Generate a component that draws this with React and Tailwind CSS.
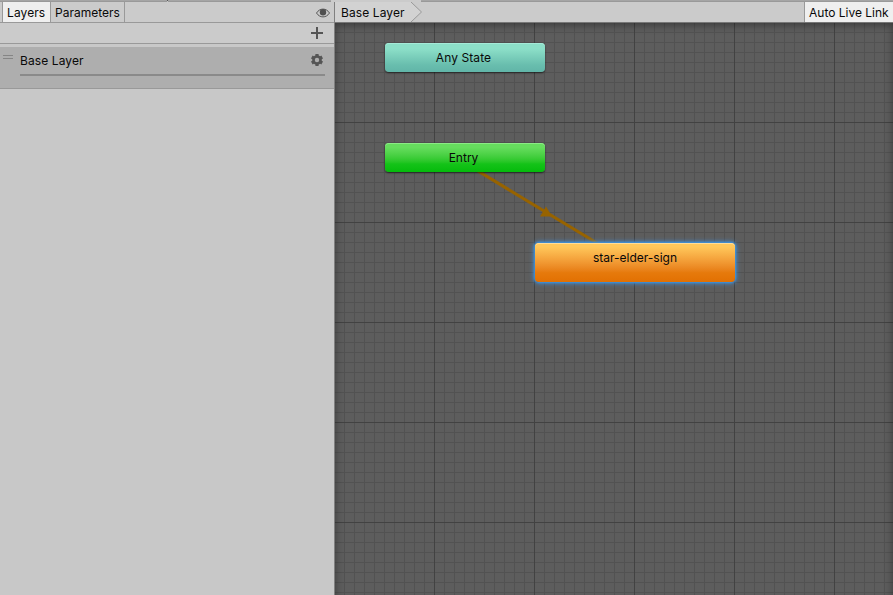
import clsx from 'clsx';

const MINOR_GRID =
  'bg-[linear-gradient(to_right,#525252_1px,transparent_1px),linear-gradient(to_bottom,#525252_1px,transparent_1px)] bg-[size:10px_10px] bg-[position:9px_9px]';
const MAJOR_GRID =
  'bg-[linear-gradient(to_right,#424242_1px,transparent_1px),linear-gradient(to_bottom,#424242_1px,transparent_1px)] bg-[size:100px_100px] bg-[position:99px_99px]';

const NODES = [
  {
    label: 'Any State',
    className:
      'left-[50px] top-[20px] w-[160px] h-[29px] pr-[3px] tracking-[0.1px] from-[#8cdfc8] from-20% via-[#69beae] via-75% to-[#61b5a8] shadow-[inset_0_1px_0_#a5ead8,0_1px_2px_rgba(0,0,0,0.6)]',
  },
  {
    label: 'Entry',
    className:
      'left-[50px] top-[120px] w-[160px] h-[29px] pr-[3px] from-[#66dd5e] from-15% via-[#14c318] via-72% to-[#04bb0b] shadow-[inset_0_1px_0_#8cea86,0_1px_2px_rgba(0,0,0,0.6)]',
  },
  {
    label: 'star-elder-sign',
    className:
      'left-[200px] top-[220px] w-[200px] h-[39px] from-[#ffc75a] from-10% via-[#e67a0c] via-76% to-[#e27002] shadow-[inset_0_1px_0_#ffdd98,0_0_2px_1px_#3f91dc,0_0_5px_1px_#3f91dc]',
  },
];

function Tab({ label, active }) {
  return (
    <button
      className={clsx(
        'h-5 border-r border-[#999] pt-px pl-1 text-left',
        active ? 'w-12 bg-[#efefef] tracking-[0.1px]' : 'w-[74px] bg-[#cbcbcb]'
      )}
    >
      {label}
    </button>
  );
}

function EyeIcon() {
  return (
    <svg width="14" height="10" viewBox="0 0 14 10" fill="none">
      <path d="M.5 5C3.7-.2 10.3-.2 13.5 5 10.3 10.2 3.7 10.2.5 5Z" stroke="#555" />
      <circle cx="7" cy="4.2" r="3.2" fill="#505050" />
    </svg>
  );
}

function GearIcon() {
  return (
    <svg width="12" height="12" viewBox="-6 -6 12 12" fill="#555">
      <circle r="3.5" fill="none" stroke="#555" strokeWidth="2.6" />
      {[0, 60, 120, 180, 240, 300].map((angle) => (
        <rect key={angle} x="-1.6" y="-6" width="3.2" height="2.6" transform={`rotate(${angle})`} />
      ))}
    </svg>
  );
}

function LayersPanel() {
  return (
    <aside className="flex w-[335px] flex-col border-r border-[#808080] bg-[#c8c8c8]">
      {/* Tabs */}
      <div className="flex h-[21px] items-start border-b border-[#999] bg-[#cbcbcb] pl-0.5">
        <div className="h-5 border-l border-[#999]" />
        <Tab label="Layers" active />
        <Tab label="Parameters" />
        <div className="mt-1.5 mr-[4px] ml-auto">
          <EyeIcon />
        </div>
      </div>

      {/* Add layer */}
      <div className="flex h-[21px] justify-end border-b border-[#999] bg-[#cbcbcb] pt-1 pr-[11px]">
        <svg width="12" height="12" viewBox="0 0 12 12" stroke="#555" strokeWidth="2">
          <path d="M6 0v12M0 6h12" />
        </svg>
      </div>

      {/* Layer row */}
      <div className="mt-[3px] flex h-[42px] border-b border-[#999] bg-[#aeaeae]">
        <div className="mt-2 ml-[3px] h-1 w-2.5 border-y border-[#858585]" />
        <div className="mr-[9px] ml-[7px] flex h-[29px] flex-1 items-start justify-between border-b-2 border-[#8a8a8a] pt-[5px]">
          <span className="tracking-[0.1px]">Base Layer</span>
          <span className="mt-0.5 mr-[2px]">
            <GearIcon />
          </span>
        </div>
      </div>
    </aside>
  );
}

function StateGraph() {
  return (
    <div className="relative flex-1 overflow-hidden bg-[#5d5d5d]">
      <div className={clsx('absolute inset-0', MINOR_GRID)} />
      <div className={clsx('absolute inset-0', MAJOR_GRID)} />
      <div className="absolute inset-x-0 top-0 -bottom-3 shadow-[inset_0_2px_9px_rgba(0,0,0,0.4)]" />

      <svg className="absolute inset-0" width="558" height="572" viewBox="0 0 558 572">
        <path d="M124 136.5L290 237" stroke="#976300" strokeWidth="3" />
        <path d="M205 193.5L211 183.5L217 193.5Z" fill="#976300" />
      </svg>

      {NODES.map((node) => (
        <div
          key={node.label}
          className={clsx(
            'absolute rounded-[4px] bg-linear-to-b pt-[6px] text-center',
            node.className
          )}
        >
          {node.label}
        </div>
      ))}
    </div>
  );
}

export default function App() {
  return (
    <div className="flex h-[595px] w-[893px] flex-col overflow-hidden bg-[#c8c8c8] font-['Inter',sans-serif] text-[12px] leading-[18px] text-[#090909]">
      {/* Window tab strip */}
      <div className="flex h-0.5 shrink-0">
        <div className="w-[167px] border-b border-[#999] bg-[#a5a5a5]" />
        <div className="h-px w-px bg-[#555]" />
        <div className="w-[163px] border-b border-[#999] bg-[#a5a5a5]" />
        <div className="w-[90px] bg-[#cbcbcb]" />
        <div className="flex-1 border-b border-[#999] bg-[#a5a5a5]" />
      </div>

      <div className="flex flex-1">
        <LayersPanel />
        <main className="flex flex-1 flex-col">
          <div className="flex h-[21px] border-b border-[#777] bg-[#cbcbcb]">
            <div className="w-[76px] bg-[#d2d2d2] pt-0.5 pl-1.5 tracking-[0.1px]">Base Layer</div>
            <svg width="12" height="20" viewBox="0 0 12 20">
              <path d="M0 0L10.5 10 0 20Z" fill="#d2d2d2" />
              <path d="M0 0L10.5 10 0 20" fill="none" stroke="#999" />
            </svg>
            <button className="ml-auto w-[89px] border-l border-[#999] bg-[#efefef] pt-px pl-1 text-left whitespace-nowrap">
              Auto Live Link
            </button>
          </div>
          <StateGraph />
        </main>
      </div>
    </div>
  );
}
